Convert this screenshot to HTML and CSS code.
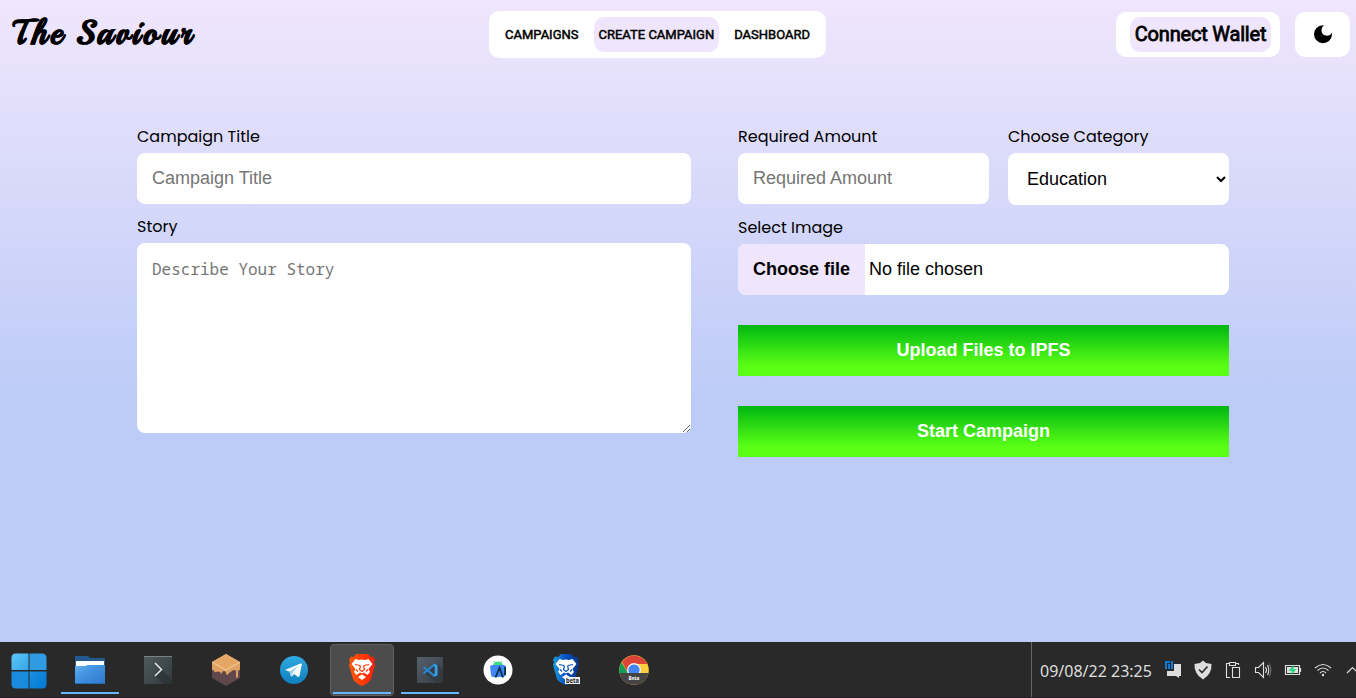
FILE: index.html
```html
<!DOCTYPE html>
<html lang="en">
<head>
<meta charset="utf-8">
<title>The Saviour</title>
<link rel="stylesheet" href="styles.css">
</head>
<body>
<div class="page">
  <header class="header">
    <div class="brand">The Saviour</div>
    <nav class="nav">
      <a class="nav-link">CAMPAIGNS</a>
      <a class="nav-link active">CREATE CAMPAIGN</a>
      <a class="nav-link">DASHBOARD</a>
    </nav>
    <div class="actions">
      <button class="wallet"><span class="wallet-label">Connect Wallet</span></button>
      <button class="theme" aria-label="Theme">
        <svg width="20" height="20" viewBox="0 0 20 20"><path d="M9.700 .2A9 9 0 1 0 19 9.500V7.700C18 9.600 16.200 10.700 14 10.700C10.900 10.700 8.500 8.400 8.500 5.500C8.500 3.200 9.500 1.200 11 .2Z"/></svg>
      </button>
    </div>
  </header>

  <main class="form">
    <section class="col col-left">
      <div class="field">
        <label class="label">Campaign Title</label>
        <input class="control" placeholder="Campaign Title">
      </div>
      <div class="field">
        <label class="label">Story</label>
        <textarea class="control story" placeholder="Describe Your Story"></textarea>
      </div>
    </section>
    <section class="col col-right">
      <div class="row">
        <div class="field amount">
          <label class="label">Required Amount</label>
          <input class="control" placeholder="Required Amount">
        </div>
        <div class="field category">
          <label class="label">Choose Category</label>
          <select class="control select"><option>Education</option><option>Health</option></select>
        </div>
      </div>
      <div class="field">
        <label class="label">Select Image</label>
        <div class="file"><span class="file-button">Choose file</span><span class="file-name">No file chosen</span></div>
      </div>
      <button class="submit">Upload Files to IPFS</button>
      <button class="submit">Start Campaign</button>
    </section>
  </main>

  <footer class="taskbar">
    <div class="start">
      <svg width="36" height="36" viewBox="0 0 36 36">
        <defs><linearGradient id="w1" x2="1" y2="1"><stop stop-color="#5cc8fa"/><stop offset="1" stop-color="#34a4e6"/></linearGradient><linearGradient id="w2" x2="1" y2="1"><stop stop-color="#1c90e0"/><stop offset="1" stop-color="#0078d4"/></linearGradient></defs>
        <path fill="url(#w1)" d="M5 .5H17.500V17H.5V5Q.5.500 5 .5Z"/><path fill="#2f9be3" d="M18.500.5H31Q35.500.5 35.500 5V17H18.500Z"/>
        <path fill="#188bdd" d="M.5 18.500H17.500V35.500H5Q.5 35.500.5 31Z"/><path fill="url(#w2)" d="M18.500 18.500H35.500V31Q35.500 35.500 31 35.500H18.500Z"/>
      </svg>
    </div>
    <div class="app running">
      <svg width="32" height="32" viewBox="0 0 32 32">
        <defs><linearGradient id="fo" x2="1" y2="1"><stop stop-color="#6ab5ef"/><stop offset=".35" stop-color="#4596e3"/><stop offset="1" stop-color="#2d78cb"/></linearGradient></defs>
        <path fill="#23598f" d="M1 2H14L16 4H31V20H1Z"/><path fill="#fff" d="M2 7H30V14H2Z"/>
        <path fill="url(#fo)" d="M1 12H12L13 11H31V30H1Z"/><path fill="#276cae" d="M1 29H31V30H1Z"/>
      </svg>
    </div>
    <div class="app">
      <svg width="30" height="30" viewBox="0 0 30 30">
        <defs><linearGradient id="te" x2="1" y2="1"><stop stop-color="#4e5b5e"/><stop offset="1" stop-color="#32393c"/></linearGradient></defs>
        <path fill="url(#te)" d="M1 1H29V29H1Z"/><path fill="#7a8486" d="M1 1H29V2H1Z"/><path fill="#262c2e" opacity=".5" d="M12 21L19 15L29 25V29H20Z"/>
        <path fill="none" stroke="#e6e6e6" stroke-width="1.500" d="M12 8L18.500 14.500L12 21"/>
      </svg>
    </div>
    <div class="app">
      <svg width="32" height="34" viewBox="0 0 32 34">
        <path fill="#5f474c" d="M2 9L16 1L30 9V25L16 33L2 25Z"/>
        <path fill="#e0a263" d="M16 1L30 9V16Q29 19 28 17V24Q27 26 26 24V18Q24 16 22 18L19 20Q18 23 16 21V19L14 18Q12 18 12 20Q11 22 10 19Q8 18 6 19Q4 20 4 17Q3 19 2 16V9Z"/>
        <path fill="#e4a766" d="M16 1L30 9L16 17L2 9Z"/><path fill="none" stroke="#f7d6a8" stroke-width=".9" d="M2.500 9.500L16 17L29.500 9.500"/>
      </svg>
    </div>
    <div class="app">
      <svg width="28" height="28" viewBox="0 0 28 28">
        <defs><linearGradient id="tg" x2="0" y2="1"><stop stop-color="#32a9e2"/><stop offset="1" stop-color="#0d7fbd"/></linearGradient></defs>
        <circle cx="14" cy="14" r="14" fill="url(#tg)"/><path fill="#fff" d="M5 14L20.500 7.500Q22 7 21.800 8.500L19.500 20Q19 21.500 17.700 20.800L14 18L12 20.500L10.800 20L9.500 15.500Z"/><path fill="#9fd0ea" d="M9.500 15.500L18 10L12.500 17L11.500 20.500L10.800 20Z"/>
      </svg>
    </div>
    <div class="app running current">
      <svg width="28" height="34" viewBox="0 0 28 34">
        <defs><linearGradient id="br" x2="1"><stop stop-color="#ff5a08"/><stop offset="1" stop-color="#ff1f08"/></linearGradient></defs>
        <path fill="url(#br)" d="M8 1H20L22.500 4L25 3.500L27 7L26 9L27 12L23 26Q21 30 14 33Q7 30 5 26L1 12L2 9L1 7L3 3.500L5.500 4Z"/>
        <path fill="#fff" d="M7.500 6L11 7L14 6.500L17 7L20.500 6L24.500 11L20.500 16L22 19L19.500 22L16 19.500L14 20.500L12 19.500L8.500 22L6 19L7.500 16L3.500 11ZM14 21.500L18 24L14 27L10 24Z"/>
        <path fill="none" stroke="#ff3908" stroke-width="1.200" d="M7 11.500L12 12.500M21 11.500L16 12.500M12.500 12.500L11.500 16.500L14 18.500L16.500 16.500L15.500 12.500M8 16.500L10 18.500M20 16.500L18 18.500"/>
      </svg>
    </div>
    <div class="app running">
      <svg width="28" height="28" viewBox="0 0 28 28">
        <defs><linearGradient id="vs" x2="1" y2="1"><stop stop-color="#56606c"/><stop offset="1" stop-color="#343b43"/></linearGradient></defs>
        <path fill="url(#vs)" d="M1 1H27V27H1Z"/><path fill="#2b3137" opacity=".5" d="M21 7L27 13V27H21L9 18Z"/>
        <path fill="none" stroke="#2686ce" stroke-width="2.200" d="M7.500 11L18.500 20M7.500 17.500L18.500 8.500"/><path fill="#39a0e8" d="M17 7.500L21.500 9V19.500L17 21L18.700 18V10.500Z"/>
      </svg>
    </div>
    <div class="app">
      <svg width="30" height="30" viewBox="0 0 30 30">
        <circle cx="15" cy="15" r="14.500" fill="#fff"/><path fill="#3ddc84" d="M10 10Q11 6.500 15 6.500Q19 6.500 20 10Z"/>
        <path stroke="#3ddc84" d="M11 6L12.500 8M19 6L17.500 8"/><path fill="#4285f4" d="M7 11L9 10H21L23 11V20L21 22H9L8 20Z"/>
        <path fill="none" stroke="#073042" stroke-width="1.800" d="M12.500 22.500L16.500 13L20 22.500M22 12V20"/>
      </svg>
    </div>
    <div class="app app-beta">
      <svg width="32" height="34" viewBox="0 0 32 34">
        <defs><linearGradient id="bb" x2="1"><stop stop-color="#1c9de0"/><stop offset=".5" stop-color="#064fc0"/><stop offset="1" stop-color="#07358a"/></linearGradient></defs>
        <path fill="url(#bb)" d="M10 1H20L23 4L26 3.500L28 7L27 9L28 12L24 26Q22 30 15 32Q7 29 6 26L2 12L3 9L2 7L4 3.500L7 4Z"/>
        <path fill="#fff" d="M8.500 6L12 7L15 6.500L18 7L21.500 6L25.500 11L21.500 16L23 19L20.500 22L17 19.500L15 20.500L13 19.500L9.500 22L7 19L8.500 16L4.500 11ZM15 21.500L19 24L15 27L11 24Z"/>
        <path fill="none" stroke="#0754b8" stroke-width="1.200" d="M8 11.500L13 12.500M22 11.500L17 12.500M13.500 12.500L12.500 16.500L15 18.500L17.500 16.500L16.500 12.500M9 16.500L11 18.500M21 16.500L19 18.500"/>
        <path fill="#f1f1f1" d="M14 24H29V31H14Z"/><text class="tiny" x="15" y="29.800" textLength="13" lengthAdjust="spacingAndGlyphs">beta</text>
      </svg>
    </div>
    <div class="app">
      <svg width="30" height="30" viewBox="0 0 30 30">
        <circle cx="15" cy="15" r="14.800" fill="#ffcd40"/><path fill="#dc4437" d="M3 7A14.800 14.800 0 0 1 28.500 9H15L8 16Z"/>
        <path fill="#0f9d58" d="M2.500 7.500L9 18H.5Q-.5 12 2.500 7.500Z"/><circle cx="15" cy="15" r="7" fill="#eee"/><circle cx="15" cy="15" r="5.600" fill="#4285f4"/>
        <path fill="#444" d="M.5 18H29.500A14.800 14.800 0 0 1 .5 18Z"/><text class="tiny light" x="9.500" y="25" textLength="11" lengthAdjust="spacingAndGlyphs">Beta</text>
      </svg>
    </div>

    <div class="tray">
      <span class="clock">09/08/22 23:25</span>
      <svg class="tray-icon" viewBox="0 0 22 22"><path fill="#dedede" d="M12 5H19V17H17V19L14 17H5V12H12Z"/><path fill="#0a7ad8" d="M3 2H8V4H5V10H3ZM6 5H8V10H6ZM9 2H11V10H9Z"/></svg>
      <svg class="tray-icon" viewBox="0 0 22 22"><path fill="#dedede" d="M11 1.500L14 4L19.500 5Q20 15 11 20.500Q2 15 2.500 5L8 4Z"/><path fill="none" stroke="#292929" stroke-width="1.600" d="M7 10.500L10 13.500L15.500 7.500"/></svg>
      <svg class="tray-icon" viewBox="0 0 22 22"><path fill="none" stroke="#dedede" stroke-width="1.100" d="M8 18.500H4.500V4.500H7M14 4.500H16.500V6M7.500 3.500H13.500V6.500H7.500ZM10.500 8.500H17.500V18.500H10.500Z"/></svg>
      <svg class="tray-icon" viewBox="0 0 22 22"><path fill="none" stroke="#dedede" stroke-width="1.100" d="M3.500 8.500H6.500L11.500 3.500V18.500L6.500 13.500H3.500ZM13.500 8Q15.500 11 13.500 14M15.500 6Q18 11 15.500 16"/><path fill="none" stroke="#777" d="M17.500 4.500Q20.500 11 17.500 17.500"/></svg>
      <svg class="tray-icon" viewBox="0 0 22 22"><path fill="none" stroke="#dedede" stroke-width="1.200" d="M3.500 6.500H17.500V15.500H3.500ZM18.500 9V13"/><path fill="#dedede" d="M5 8H16V14H5Z"/><path fill="#20d878" d="M12 6L6.500 11.700H10L9 16L14.500 10.300H11.500Z"/></svg>
      <svg class="tray-icon" viewBox="0 0 22 22"><g fill="none" stroke="#dedede" stroke-width="1.100"><path d="M3 9Q11 2 19 9M5.500 11.500Q11 6.500 16.500 11.500M8 14Q11 11 14 14"/></g><circle cx="11" cy="16" r="1.200" fill="#dedede"/></svg>
      <svg class="tray-icon" viewBox="0 0 22 22"><path fill="none" stroke="#dedede" stroke-width="1.200" d="M5 14L10.500 8.500L16 14"/></svg>
    </div>
  </footer>
</div>
</body>
</html>
```

FILE: styles.css
```css
* { box-sizing: border-box; }
body { margin: 0; overflow: hidden; }
.page {
  height: 698px;
  display: flex;
  flex-direction: column;
  background: linear-gradient(180deg, #f0e6fd 0, #bccbf7 400px);
  font-family: "Liberation Sans", Arial, sans-serif;
  color: #000;
}
button { border: 0; margin: 0; color: #000; }

.header {
  display: grid;
  grid-template-columns: 489px 337px 1fr;
  align-items: start;
  padding: 11px 6px 0 0;
  height: 125px;
}
.brand {
  padding-left: 13px;
  font: bold 34px/44px Playball, "Liberation Serif", serif;
  letter-spacing: 3.2px;
  word-spacing: -3px;
  -webkit-text-stroke: .5px #000;
  white-space: nowrap;
}
.nav {
  display: flex;
  align-items: center;
  justify-content: center;
  gap: 10px;
  height: 47px;
  border-radius: 10px;
  background: #fff;
}
.nav-link {
  padding: 0 5px;
  border-radius: 10px;
  font: 400 13px/35px Roboto, sans-serif;
  -webkit-text-stroke: .5px #000;
  white-space: nowrap;
}
.nav-link.active { background: #efe6fd; }
.actions { display: flex; justify-content: flex-end; gap: 15px; padding-top: 1px; }
.wallet {
  width: 164px;
  height: 45px;
  padding: 0 9px 0 14px;
  border-radius: 10px;
  background: #fff;
}
.wallet-label {
  display: block;
  border-radius: 10px;
  background: #efe6fd;
  font: 400 20px/35px Roboto, sans-serif;
  -webkit-text-stroke: .8px #000;
  letter-spacing: -.2px;
  white-space: nowrap;
}
.theme {
  display: flex;
  align-items: center;
  justify-content: center;
  width: 55px;
  height: 45px;
  padding: 0;
  border-radius: 10px;
  background: #fff;
}

.form {
  flex: 1;
  display: grid;
  grid-template-columns: 554px 491px;
  column-gap: 47px;
  align-items: start;
  padding-left: 137px;
}
.col { display: flex; flex-direction: column; gap: 11px; }
.field { display: flex; flex-direction: column; gap: 4px; }
.label { font: 16px/24px Poppins, Inter, sans-serif; align-self: flex-start; white-space: nowrap; }
.control {
  width: 100%;
  height: 51px;
  margin: 0;
  padding: 15px;
  border: 0;
  border-radius: 8px;
  background: #fff;
  font: 18px "Liberation Sans", Arial, sans-serif;
}
.control::placeholder { color: #757575; }
.story { height: 190px; font: 16px/22px "Noto Sans Mono", "DejaVu Sans Mono", monospace; }
.select { height: 52px; color: #000; }
.row { display: flex; justify-content: space-between; }
.amount { width: 251px; }
.category { width: 221px; }
.file {
  display: flex;
  height: 51px;
  overflow: hidden;
  border-radius: 8px;
  background: #fff;
  font-size: 18px;
  line-height: 50px;
}
.file-button { width: 127px; padding-left: 15px; background: #efe6fd; font-weight: bold; }
.file-name { padding-left: 4px; }
.submit {
  height: 51px;
  margin-top: 19px;
  background: linear-gradient(180deg, #00b712 0%, #5aff15 80%);
  color: #fff;
  font: bold 18px "Liberation Sans", Arial, sans-serif;
}

.taskbar { display: flex; height: 56px; background: #292929; border-bottom: 1px solid #211d20; }
.start, .app { display: flex; align-items: center; justify-content: center; }
.start { width: 56px; padding: 2px 0 0 1px; }
.app { width: 68px; margin: 0; border: 2px solid transparent; }
.app-beta { padding-left: 2px; }
.running { background: linear-gradient(#67b7f9, #67b7f9) center bottom 1px / 58px 2px no-repeat; }
.current {
  width: 64px;
  margin: 2px 2px 1px;
  border: 1px solid #606060;
  border-radius: 4px;
  background: linear-gradient(#67b7f9, #67b7f9) center bottom 1px / 58px 2px no-repeat, #4c4c4c;
}
.tray {
  display: flex;
  align-items: center;
  margin-left: auto;
  width: 325px;
  padding: 1px 0 0 8px;
  border-left: 1px solid #666;
  overflow: hidden;
}
.clock { flex: none; width: 122px; padding-top: 1px; font: 16px/24px "Noto Sans", sans-serif; color: #dedede; white-space: nowrap; }
.tray-icon { flex: none; width: 22px; height: 22px; margin-right: 8px; }
.tiny { font: bold 7px "Noto Sans", sans-serif; fill: #222; }
.light { font-size: 6px; fill: #fff; }
```
